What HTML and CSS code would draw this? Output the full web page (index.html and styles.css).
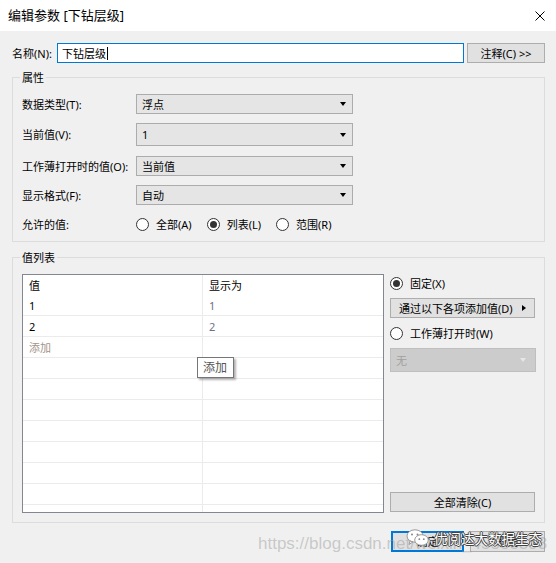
FILE: index.html
```html
<!DOCTYPE html>
<html lang="zh-CN">
<head>
<meta charset="utf-8">
<title>编辑参数</title>
<link rel="stylesheet" href="styles.css">
</head>
<body>
<div class="titlebar">
  <span class="title">编辑参数 [下钻层级]</span>
  <svg class="close" width="10" height="10" viewBox="0 0 10 10"><path d="M0.5 0.5L9.5 9.5M9.5 0.5L0.5 9.5" stroke="#000" stroke-width="1"/></svg>
</div>
<div class="main">
  <div class="name-row">
    <span class="name-label">名称(N):</span>
    <div class="name-input"><span>下钻层级</span><span class="caret"></span></div>
    <div class="btn note-btn">注释(C) &gt;&gt;</div>
  </div>

  <div class="group props">
    <span class="legend">属性</span>
    <div class="prop-row">
      <span class="prop-label">数据类型(T):</span>
      <div class="select"><span>浮点</span><i class="arrow"></i></div>
    </div>
    <div class="prop-row tall">
      <span class="prop-label">当前值(V):</span>
      <div class="select"><span>1</span><i class="arrow"></i></div>
    </div>
    <div class="prop-row">
      <span class="prop-label">工作薄打开时的值(O):</span>
      <div class="select"><span>当前值</span><i class="arrow"></i></div>
    </div>
    <div class="prop-row">
      <span class="prop-label">显示格式(F):</span>
      <div class="select"><span>自动</span><i class="arrow"></i></div>
    </div>
    <div class="prop-row radios">
      <span class="prop-label">允许的值:</span>
      <div class="radio-item"><span class="radio"></span><span>全部(A)</span></div>
      <div class="radio-item"><span class="radio on"></span><span>列表(L)</span></div>
      <div class="radio-item"><span class="radio"></span><span>范围(R)</span></div>
    </div>
  </div>

  <div class="group values">
    <span class="legend">值列表</span>
    <div class="values-body">
      <div class="table-wrap">
        <div class="table">
          <div class="trow head"><div class="cell">值</div><div class="cell">显示为</div></div>
          <div class="trow"><div class="cell">1</div><div class="cell alias">1</div></div>
          <div class="trow"><div class="cell">2</div><div class="cell alias">2</div></div>
          <div class="trow"><div class="cell add">添加</div><div class="cell"></div></div>
          <div class="trow"><div class="cell"></div><div class="cell"></div></div>
          <div class="trow"><div class="cell"></div><div class="cell"></div></div>
          <div class="trow"><div class="cell"></div><div class="cell"></div></div>
          <div class="trow"><div class="cell"></div><div class="cell"></div></div>
          <div class="trow"><div class="cell"></div><div class="cell"></div></div>
          <div class="trow"><div class="cell"></div><div class="cell"></div></div>
          <div class="trow"><div class="cell"></div><div class="cell"></div></div>
          <div class="trow"><div class="cell"></div><div class="cell"></div></div>
        </div>
        <div class="tooltip">添加</div>
      </div>
      <div class="side">
        <div class="radio-item side-radio"><span class="radio on"></span><span>固定(X)</span></div>
        <div class="btn add-btn"><span>通过以下各项添加值(D)</span><i class="rarrow"></i></div>
        <div class="radio-item side-radio"><span class="radio"></span><span>工作薄打开时(W)</span></div>
        <div class="select disabled"><span>无</span><i class="arrow"></i></div>
        <div class="btn clear-btn">全部清除(C)</div>
      </div>
    </div>
  </div>

  <div class="footer">
    <div class="btn ok-btn">确定</div>
    <div class="btn">取消</div>
  </div>
</div>

<div class="wm-url">https://blog.csdn.net/weixin_45553393</div>
<div class="wm-brand">
  <svg class="wm-icon" width="24" height="18" viewBox="0 0 24 18">
    <ellipse cx="9" cy="7" rx="8" ry="6.2" fill="#fff" stroke="#9a9a9a" stroke-width="1"/>
    <path d="M4 12 L3 15.5 L7 12.8 Z" fill="#fff" stroke="#9a9a9a" stroke-width="1"/>
    <ellipse cx="15.5" cy="11" rx="6.8" ry="5.3" fill="#fff" stroke="#9a9a9a" stroke-width="1"/>
    <circle cx="6" cy="5.5" r="1" fill="#888"/>
    <circle cx="11.5" cy="5.5" r="1" fill="#888"/>
    <circle cx="13.3" cy="10.2" r="0.9" fill="#888"/>
    <circle cx="17.8" cy="10.2" r="0.9" fill="#888"/>
  </svg>
  <span class="wm-text">优阅达大数据生态</span>
</div>
</body>
</html>
```

FILE: styles.css
```css
* { box-sizing: border-box; }

body {
  margin: 0;
  width: 556px;
  height: 563px;
  overflow: hidden;
  position: relative;
  background: #f0f0f0;
  color: #000;
  font-family: "Noto Sans", "Noto Sans CJK SC", sans-serif;
  font-size: 11px;
  line-height: 1;
}

.titlebar {
  height: 31px;
  background: #fff;
  display: flex;
  align-items: center;
  padding-left: 8px;
  padding-right: 11px;
}
.title { font-size: 13px; }
.close { margin-left: auto; }

.main { padding: 0 11px 0 12px; }

.name-row {
  margin-top: 12px;
  height: 20px;
  display: flex;
  align-items: stretch;
}
.name-label { width: 45px; display: flex; align-items: center; }
.name-input {
  width: 407px;
  margin-right: 3px;
  background: #fff;
  border: 1px solid #0078d7;
  display: flex;
  align-items: center;
  padding-left: 4px;
  font-size: 11px;
}
.caret { width: 1px; height: 13px; background: #000; margin-left: 1px; }

.btn {
  background: #e1e1e1;
  border: 1px solid #adadad;
  display: flex;
  align-items: center;
  justify-content: center;
  height: 20px;
}
.note-btn { width: 78px; }

.group {
  position: relative;
  border: 1px solid #dcdcdc;
}
.legend {
  position: absolute;
  left: 7px;
  top: -7px;
  padding: 0 2px;
  background: #f0f0f0;
  line-height: 13px;
}

.props {
  margin-top: 14px;
  height: 165px;
  padding: 16px 0 0 9px;
}
.prop-row {
  display: flex;
  align-items: center;
  height: 20px;
  margin-bottom: 9px;
}
.prop-row.tall { height: 23px; margin-bottom: 10px; }
.prop-row.radios { margin-top: 1px; }
.prop-label { width: 114px; }

.select {
  width: 217px;
  height: 100%;
  background: #e5e5e5;
  border: 1px solid #acacac;
  display: flex;
  align-items: center;
  padding-left: 5px;
  padding-right: 6px;
}
.arrow {
  margin-left: auto;
  width: 0;
  height: 0;
  border-left: 3.5px solid transparent;
  border-right: 3.5px solid transparent;
  border-top: 4px solid #000;
}

.radio-item { display: flex; align-items: center; margin-right: 15px; }
.radio {
  position: relative;
  width: 13px;
  height: 13px;
  border: 1px solid #333;
  border-radius: 50%;
  background: #fff;
  margin-right: 7px;
}
.radio.on::after {
  content: "";
  position: absolute;
  left: 2px;
  top: 2px;
  width: 7px;
  height: 7px;
  border-radius: 50%;
  background: #333;
}

.values {
  margin-top: 15px;
  height: 266px;
  padding: 16px 9px 9px 9px;
}
.values-body { display: flex; gap: 6px; height: 239px; }

.table-wrap { position: relative; width: 362px; height: 239px; }
.table {
  height: 100%;
  border: 1px solid #828790;
  background: #fff;
  overflow: hidden;
}
.trow {
  display: grid;
  grid-template-columns: 180px 1fr;
  height: 21px;
  border-bottom: 1px solid #ebebeb;
}
.trow.head { height: 20px; border-bottom: none; }
.cell {
  display: flex;
  align-items: center;
  padding-left: 6px;
}
.cell:first-child { border-right: 1px solid #ebebeb; }
.cell.alias { color: #6e6e88; }
.cell.add { color: #a39489; }

.tooltip {
  position: absolute;
  left: 175px;
  top: 83px;
  width: 37px;
  height: 21px;
  background: #fff;
  border: 1px solid #767676;
  box-shadow: 2px 2px 2px rgba(0, 0, 0, 0.3);
  display: flex;
  align-items: center;
  padding-left: 5px;
  color: #555;
  font-size: 12px;
}

.side {
  width: 145px;
  display: flex;
  flex-direction: column;
  padding-bottom: 1px;
}
.side-radio { height: 18px; margin-right: 0; }
.add-btn {
  margin-top: 6px;
  justify-content: flex-start;
  padding: 0 8px;
}
.rarrow {
  margin-left: auto;
  width: 0;
  height: 0;
  border-top: 3.5px solid transparent;
  border-bottom: 3.5px solid transparent;
  border-left: 4px solid #000;
}
.side .side-radio + .select, .add-btn + .side-radio { margin-top: 6px; }
.select.disabled {
  width: 146px;
  height: 24px;
  flex: none;
  background: #cccccc;
  border-color: #bfbfbf;
  color: #a0a0a0;
}
.select.disabled .arrow { border-top-color: #e6e6e6; margin-right: 3px; }
.clear-btn { margin-top: auto; }

.footer {
  margin-top: 8px;
  display: flex;
  justify-content: flex-end;
  gap: 6px;
}
.footer .btn { width: 75px; height: 21px; }
.footer .ok-btn { width: 73px; border: 2px solid #0078d7; }

.wm-url {
  position: absolute;
  left: 258px;
  top: 534px;
  font-family: "Liberation Sans", sans-serif;
  font-size: 17px;
  line-height: 20px;
  color: rgba(150, 150, 150, 0.45);
  white-space: nowrap;
}
.wm-brand {
  position: absolute;
  left: 406px;
  top: 528px;
  display: flex;
  align-items: center;
  gap: 4px;
}
.wm-text {
  font-family: "Noto Sans CJK SC", sans-serif;
  font-size: 13.5px;
  line-height: 20px;
  color: #fff;
  text-shadow: 1px 0 0 #444, -1px 0 0 #444, 0 1px 0 #444, 0 -1px 0 #444;
  white-space: nowrap;
}
```
